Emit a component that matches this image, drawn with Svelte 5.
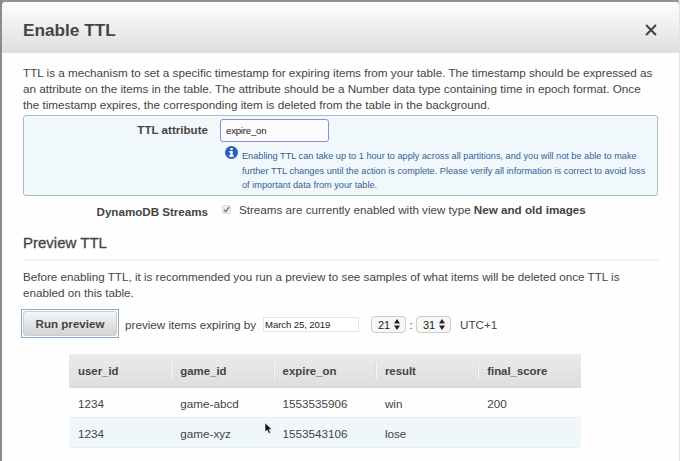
<script>
  const intro = [
    'TTL is a mechanism to set a specific timestamp for expiring items from your table. The timestamp should be expressed as',
    'an attribute on the items in the table. The attribute should be a Number data type containing time in epoch format. Once',
    'the timestamp expires, the corresponding item is deleted from the table in the background.'
  ];
  const notes = [
    'Enabling TTL can take up to 1 hour to apply across all partitions, and you will not be able to make',
    'further TTL changes until the action is complete. Please verify all information is correct to avoid loss',
    'of important data from your table.'
  ];
  const columns = ['user_id', 'game_id', 'expire_on', 'result', 'final_score'];
  const rows = [
    ['1234', 'game-abcd', '1553535906', 'win', '200'],
    ['1234', 'game-xyz', '1553543106', 'lose', '']
  ];
</script>

<div class="page">
  <div class="dialog">
    <header>
      <h1>Enable TTL</h1>
      <svg class="close" width="12" height="12" viewBox="0 0 12 12"><path d="M1.1 1.1 10.9 10.9M10.9 1.1 1.1 10.9" /></svg>
    </header>
    <main>
      <div class="intro">
        {#each intro as line}<div>{line}</div>{/each}
      </div>
      <section class="attribute">
        <div class="label">TTL attribute</div>
        <div class="field">
          <div class="input">expire_on</div>
          <div class="note">
            <svg width="13" height="13" viewBox="0 0 13 13">
              <circle cx="6.5" cy="6.5" r="6.5" fill="#2b5fb5" />
              <path d="M5.4 1.9h2.3v2H5.4zM4.3 5h3.4v4.2h1v1.5H4.3V9.2h1V6.5h-1z" fill="#fff" />
            </svg>
            <div>{#each notes as line}<div>{line}</div>{/each}</div>
          </div>
        </div>
      </section>
      <section class="streams">
        <div class="label">DynamoDB Streams</div>
        <div class="check"><svg width="7" height="7" viewBox="0 0 7 7"><path d="M1 3.8 2.8 5.7 6 1" /></svg></div>
        <div class="status">Streams are currently enabled with view type <b>New and old images</b></div>
      </section>
      <h2>Preview TTL</h2>
      <div class="before">
        <div>Before enabling TTL, it is recommended you run a preview to see samples of what items will be deleted once TTL is</div>
        <div>enabled on this table.</div>
      </div>
      <div class="run">
        <div class="focus"><div class="button">Run preview</div></div>
        <span class="by">preview items expiring by</span>
        <div class="date">March 25, 2019</div>
        {#each ['21', '31'] as value, i}
          {#if i}<span class="colon">:</span>{/if}
          <div class="select">
            <span>{value}</span>
            <svg width="6" height="11" viewBox="0 0 6 11"><path d="M0 4.6 3 0 6 4.6zM0 6.4h6L3 11z" /></svg>
          </div>
        {/each}
        <span class="zone">UTC+1</span>
      </div>
      <div class="table">
        <div class="tr head">{#each columns as c}<div><span>{c}</span></div>{/each}</div>
        {#each rows as row}
          <div class="tr">{#each row as cell}<div>{cell}</div>{/each}</div>
        {/each}
      </div>
    </main>
  </div>
  <svg class="cursor" width="9" height="13" viewBox="0 0 9 13"><path d="M1 .8V10.1L3.2 8.1 4.8 11.6 6.5 10.8 5 7.5H8z" /></svg>
</div>

<style>
  .page {
    position: relative;
    box-sizing: border-box;
    width: 680px;
    height: 461px;
    padding: 2px 1px 0 2px;
    overflow: hidden;
    background: linear-gradient(90deg, #8b8b8d 0 2px, transparent 2px 678px, #e2e2e2 679px), #929692;
    font-family: "Liberation Sans", Arial, sans-serif;
    font-size: 11.7px;
    color: #444;
    white-space: nowrap;
  }
  .dialog {
    height: 459px;
    border-radius: 4px 4px 0 0;
    overflow: hidden;
    background: #fefefe;
  }
  header {
    box-sizing: border-box;
    height: 51px;
    padding: 0 22px 0 21px;
    display: flex;
    align-items: center;
    justify-content: space-between;
    background: linear-gradient(#fefefe, #dedede);
  }
  h1 { margin: 5px 0 0; font-size: 17.2px; line-height: 20px; }
  .close { margin-top: 5px; fill: none; stroke: #444; stroke-width: 2.1; }
  main { padding: 12px 21px 0; }
  .intro, .before { line-height: 16px; }
  .attribute {
    box-sizing: border-box;
    width: 635px;
    height: 81px;
    margin-top: 2px;
    padding-top: 3px;
    display: flex;
    border: 1px solid #a3bfc1;
    border-radius: 3px;
    background: #f0f8fc;
  }
  .label { width: 184px; text-align: right; font-weight: bold; font-size: 11.6px; line-height: 22px; }
  .field { margin-left: 12px; }
  .input {
    box-sizing: border-box;
    width: 109px;
    height: 23px;
    padding-left: 5px;
    border: 1.5px solid #8f8bd6;
    border-radius: 3px;
    background: #fcfcfe;
    color: #222;
    font-size: 9.6px;
    letter-spacing: -0.2px;
    line-height: 21px;
  }
  .note { display: flex; gap: 4px; padding: 4px 0 0 5px; font-size: 9.18px; line-height: 14.5px; color: #356097; }
  .note > div { padding-top: 3px; }
  .streams { display: flex; margin-top: 3px; height: 26px; }
  .streams .label { width: 185px; line-height: 26px; }
  .check {
    width: 7px; height: 7px;
    margin: 6px 8px 0 14px;
    border: 1px solid #ddd;
    border-radius: 2px;
    background: #f1f1f1;
    line-height: 0;
  }
  .check path { fill: none; stroke: #777; stroke-width: 1.4; }
  .status { font-size: 11.65px; line-height: 21px; }
  h2 {
    margin: 4px 0 0;
    width: 636px;
    height: 30px;
    border-bottom: 2px solid #f0f0f0;
    font-size: 15px;
    font-weight: normal;
    line-height: 27px;
    -webkit-text-stroke: 0.3px #444;
  }
  .before { margin-top: 8px; font-size: 11.66px; }
  .run { display: flex; align-items: center; margin: 8px 0 0 -2px; height: 29px; }
  .focus { box-sizing: border-box; width: 98px; height: 29px; padding: 1px; border: 1px solid #82a9cc; background: #fff; }
  .button {
    box-sizing: border-box;
    height: 25px;
    border: 1px solid #ccc;
    border-radius: 3px;
    background: linear-gradient(#f6f6f6, #d4d4d4);
    text-align: center;
    font-weight: bold;
    font-size: 11.6px;
    line-height: 23px;
  }
  .by { width: 138px; margin-left: 6px; padding-top: 2px; }
  .date {
    box-sizing: border-box;
    width: 96px; height: 15px;
    margin-top: 1px;
    padding-left: 1px;
    border: 1px solid #e5e5e5;
    background: #fff;
    color: #222;
    font-size: 9.6px;
    letter-spacing: -0.1px;
    line-height: 13px;
  }
  .select {
    box-sizing: border-box;
    width: 35px; height: 17px;
    margin-top: 2px;
    padding: 0 5px 0 6px;
    display: flex;
    align-items: center;
    justify-content: space-between;
    border: 1px solid #ccc;
    border-radius: 4px;
    background: #f7f7f7;
    color: #222;
    font-size: 11px;
  }
  .date + .select { margin-left: 12px; }
  .select path { fill: #222; }
  .colon { width: 10px; padding-top: 2px; text-align: center; }
  .zone { margin-left: 9px; padding-top: 1px; }
  .table { width: 512px; margin: 16px 0 0 46px; }
  .tr { display: flex; box-sizing: border-box; height: 30px; border-bottom: 1px solid #e9eef0; line-height: 31px; }
  .tr:nth-child(2) { height: 29.5px; }
  .tr > div { width: 102.3px; box-sizing: border-box; padding-left: 9px; }
  .tr:last-child { background: #f0f7fb; }
  .head { height: 34px; border-color: #d8d8d8; background: linear-gradient(#ebebeb, #dedede); font-weight: bold; font-size: 11.4px; align-items: center; line-height: 16px; }
  .head > div + div { padding-left: 8px; border-left: 1px solid #f5f5f5; box-shadow: -1px 0 #ddd; }
  .cursor { position: absolute; left: 264px; top: 422px; fill: #111; stroke: #fff; stroke-width: .6; }
</style>
